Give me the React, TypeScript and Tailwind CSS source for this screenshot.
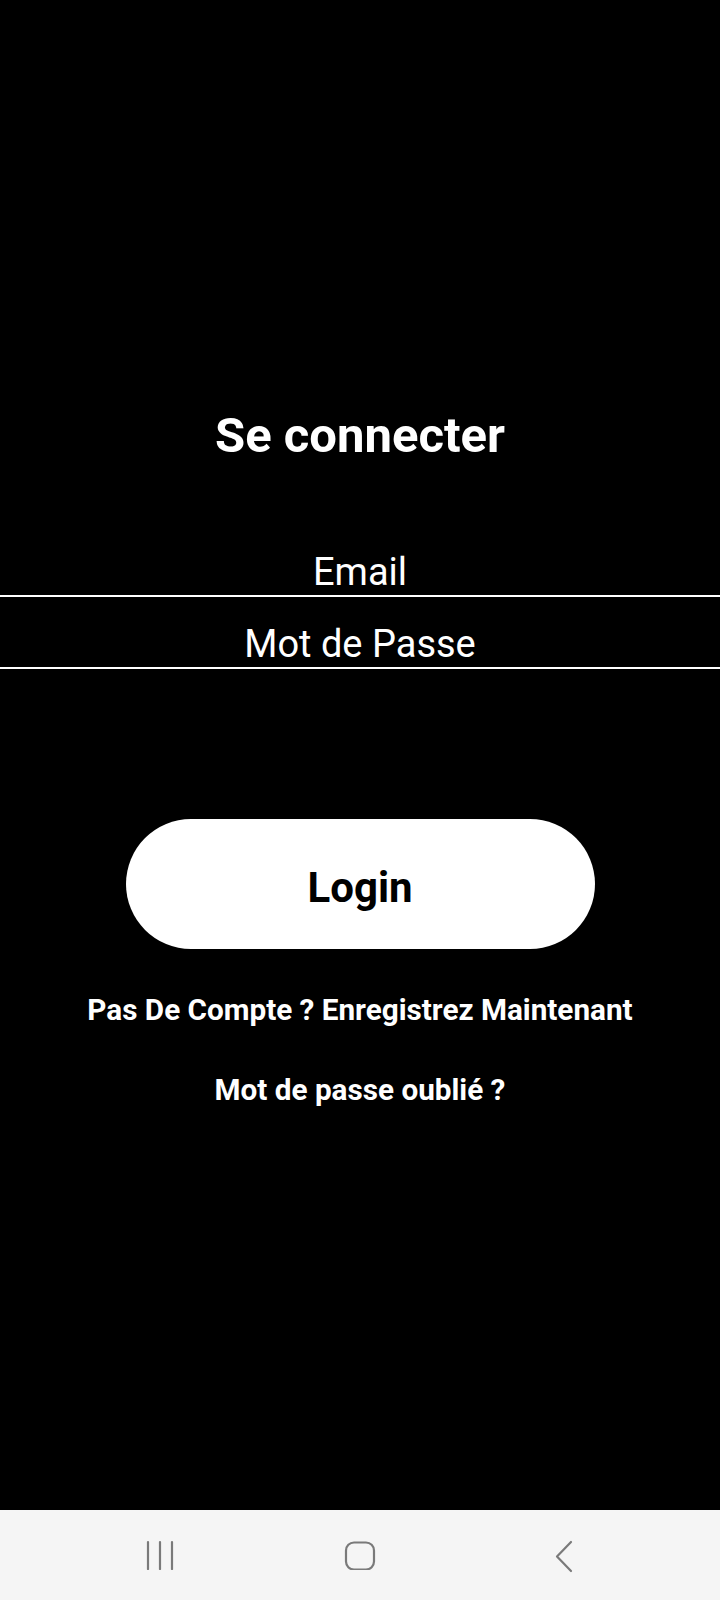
import React from "react";

function NavBar() {
  return (
    <div className="h-[90px] bg-[#f5f5f5] flex items-start">
      <div className="w-full relative h-full">
        {/* recent apps */}
        <svg
          className="absolute left-[140px] top-[20px]"
          width="40"
          height="40"
          viewBox="0 0 40 40"
          fill="none"
          stroke="#7a7a7a"
          strokeWidth="2.2"
          strokeLinecap="round"
        >
          <line x1="8" y1="12" x2="8" y2="39" />
          <line x1="20" y1="12" x2="20" y2="39" />
          <line x1="32" y1="12" x2="32" y2="39" />
        </svg>
        {/* home */}
        <svg
          className="absolute left-[340px] top-[20px]"
          width="40"
          height="40"
          viewBox="0 0 40 40"
          fill="none"
          stroke="#7a7a7a"
          strokeWidth="2.2"
        >
          <rect x="6" y="12.5" width="28" height="27" rx="8" />
        </svg>
        {/* back */}
        <svg
          className="absolute left-[545px] top-[20px]"
          width="40"
          height="44"
          viewBox="0 0 40 44"
          fill="none"
          stroke="#7a7a7a"
          strokeWidth="2.2"
          strokeLinecap="round"
          strokeLinejoin="round"
        >
          <polyline points="26,12 12,26.5 26,41" />
        </svg>
      </div>
    </div>
  );
}

function Field({ label, height }: { label: string; height: string }) {
  return (
    <div
      className={`w-full ${height} flex items-end justify-center pb-[1px] border-b-2 border-white`}
    >
      <span className="text-[38px] leading-[44px] text-white">{label}</span>
    </div>
  );
}

export default function App() {
  return (
    <div
      className="h-[1600px] w-[720px] flex flex-col bg-black"
      style={{ fontFamily: "Roboto, 'Noto Sans', sans-serif" }}
    >
      <div className="flex-1 flex flex-col items-center">
        <h1 className="pt-[407px] text-[49px] leading-[58px] font-bold text-white">
          Se connecter
        </h1>

        <div className="w-full mt-[59px]">
          <Field label="Email" height="h-[73px]" />
          <Field label="Mot de Passe" height="h-[72px]" />
        </div>

        <button className="mt-[150px] w-[469px] h-[130px] pt-[6px] rounded-full bg-white text-black text-[42px] font-bold">
          Login
        </button>

        <a className="mt-[43px] text-[29.7px] leading-[36px] font-bold text-white">
          Pas De Compte ? Enregistrez Maintenant
        </a>
        <a className="mt-[44px] text-[29.7px] leading-[36px] font-bold text-white">
          Mot de passe oublié ?
        </a>
      </div>
      <NavBar />
    </div>
  );
}
